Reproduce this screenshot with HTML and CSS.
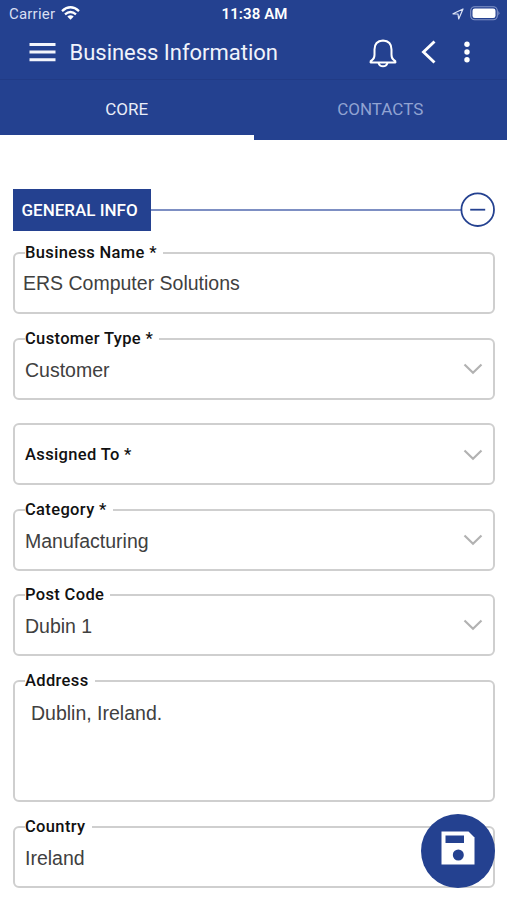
FILE: index.html
```html
<!DOCTYPE html>
<html lang="en">
<head>
<meta charset="utf-8">
<title>Business Information</title>
<link rel="stylesheet" href="styles.css">
</head>
<body>
<header class="header">
  <div class="status">
    <div class="status-left"><span class="carrier">Carrier</span>
      <svg width="19" height="14" viewBox="0 0 19 14" fill="none" stroke="#fff" stroke-width="2.3"><path d="M1 5.1Q9.5-2.5 18 5.1M4 8.4q5.5-4.8 11 0"/><path d="M6.3 10.6q3.2-2.6 6.4 0L9.5 13.8z" fill="#fff" stroke="none"/></svg>
    </div>
    <span class="clock">11:38 AM</span>
    <div class="status-right">
      <svg width="12" height="12" viewBox="0 0 12 12" fill="none" stroke="#dce3f5" stroke-width="1.2" stroke-linejoin="round"><path d="M1 5.8 11 1 6.7 11 6 6z"/></svg>
      <svg width="30" height="15" viewBox="0 0 30 15"><rect x=".7" y=".7" width="26.6" height="13.1" rx="4" fill="none" stroke="#8395c8" stroke-width="1.1"/><rect x="2.5" y="2.5" width="23" height="9.5" rx="2.3" fill="#fff"/><path d="M28.4 5q2 2.2 0 4.4z" fill="#8395c8"/></svg>
    </div>
  </div>
  <div class="toolbar">
    <svg class="menu" width="27" height="20" viewBox="0 0 27 20" stroke="#f3f5fc" stroke-width="2.9"><path d="M.5 2.500h26M.5 10h26M.5 17.700h26"/></svg>
    <h1 class="title">Business Information</h1>
    <svg class="bell" width="28" height="29" viewBox="0 0 28 29" fill="none" stroke="#fff" stroke-width="2" stroke-linejoin="round"><path d="M1.500 23.400q-.3-1.400 1.700-2.400Q5.500 19.500 5.500 15.800V10.500Q5.500 2 14 1.500 22.500 2 22.500 10.500v5.300q0 3.700 2.300 5.200 2 1 1.700 2.400z"/><path d="M9.500 23.700q1 3.600 4.500 3.600t4.500-3.600"/></svg>
    <svg class="back" width="15" height="24" viewBox="0 0 15 24" fill="none" stroke="#fff" stroke-width="2.900"><path d="M13.500 1.500 2.500 12l11 10.500"/></svg>
    <svg class="more" width="6" height="22" viewBox="0 0 6 22" fill="#fff"><circle cx="3" cy="3.300" r="2.700"/><circle cx="3" cy="11" r="2.700"/><circle cx="3" cy="18.700" r="2.700"/></svg>
  </div>
  <nav class="tabs">
    <div class="tab active"><span>CORE</span></div>
    <div class="tab"><span>CONTACTS</span></div>
  </nav>
</header>
<main class="form">
  <div class="section">
    <h2 class="section-title">GENERAL INFO</h2>
    <div class="rule"></div>
    <svg width="35" height="36" viewBox="0 0 35 36" fill="none" stroke="#244190" stroke-width="1.800"><circle cx="17.700" cy="17.700" r="16.300"/><path d="M10.200 17.700h15"/></svg>
  </div>
  <div class="field text"><label>Business Name *</label><span class="value">ERS Computer Solutions</span></div>
  <div class="field"><label>Customer Type *</label><span class="value">Customer</span><svg class="chevron" viewBox="0 0 20 12"><path d="m1.500 1.500 8.500 8.200 8.500-8.200"/></svg></div>
  <div class="field empty"><label>Assigned To *</label><svg class="chevron" viewBox="0 0 20 12"><path d="m1.500 1.500 8.500 8.200 8.500-8.200"/></svg></div>
  <div class="field"><label>Category *</label><span class="value">Manufacturing</span><svg class="chevron" viewBox="0 0 20 12"><path d="m1.500 1.500 8.500 8.200 8.500-8.200"/></svg></div>
  <div class="field"><label>Post Code</label><span class="value">Dubin 1</span><svg class="chevron" viewBox="0 0 20 12"><path d="m1.500 1.500 8.500 8.200 8.500-8.200"/></svg></div>
  <div class="field area"><label>Address</label><span class="value">Dublin, Ireland.</span></div>
  <div class="field"><label>Country</label><span class="value">Ireland</span></div>
</main>
<button class="save" aria-label="Save">
  <svg width="34" height="34" viewBox="0 0 34 34"><path d="M.5.500h27l6 6V33.500H.500z" fill="#fff"/><path d="M4.500 4.500h18.500v7.500H4.500z" fill="#244190"/><circle cx="17.300" cy="24" r="5.500" fill="#244190"/></svg>
</button>
</body>
</html>
```
FILE: styles.css
```css
* { box-sizing: border-box; }
body { margin: 0; height: 900px; overflow: hidden; background: #fff; font-family: Roboto, sans-serif; }
svg { display: block; flex: none; }
.header { height: 140px; background: #244190; color: #fff; }
.status { height: 28px; padding: 0 7px 0 9px; display: grid; grid-template-columns: 1fr auto 1fr; align-items: center; }
.status-left { display: flex; align-items: center; gap: 6px; }
.status-left svg { margin-top: -2px; }
.carrier { font-size: 15px; letter-spacing: .2px; color: #d8dff2; }
.clock { font-size: 15px; font-weight: 600; letter-spacing: .1px; }
.status-right { display: flex; justify-content: flex-end; align-items: center; gap: 6px; }
.status-right svg { margin-top: -1px; }
.toolbar { height: 51px; padding: 0 37px 3px 29px; display: flex; align-items: center; }
.menu { margin-top: -1px; }
.title { margin: 0 auto 0 13.5px; font-size: 22px; font-weight: 400; letter-spacing: -.02px; color: #f0f3fb; white-space: nowrap; }
.bell { margin-right: 24px; margin-top: 3px; }
.back { margin-right: 28px; }
.tabs { height: 61px; display: flex; border-top: 1px solid #213b86; }
.tab { flex: 1; display: flex; align-items: center; justify-content: center; font-size: 17px; color: #91a3d2; padding-bottom: 2px; }
.tab.active { color: #e9edf8; border-bottom: 5px solid #fff; padding-top: 3px; padding-bottom: 0; }
.form { padding: 49px 12px 0 13px; }
.section { height: 42px; display: flex; align-items: center; margin-bottom: 21px; }
.section-title { margin: 0; width: 138px; height: 42px; background: #244190; color: #fff; font-size: 17px; font-weight: 500; line-height: 42px; padding-left: 8.5px; white-space: nowrap; }
.rule { flex: 1; height: 2px; background: #7d8fc3; margin-right: -1px; }
.field { position: relative; height: 62px; margin-bottom: 23.5px; border: 2px solid #cfcfcf; border-radius: 6px; display: flex; align-items: center; padding: 3.500px 10px 0; color: #404040; font: 19.5px "Liberation Sans", sans-serif; }
.field label { position: absolute; left: 10px; top: -11px; height: 20px; line-height: 20px; padding-right: 6px; background: #fff; color: #111; font-family: Roboto, sans-serif; font-size: 16.5px; font-weight: 500; letter-spacing: .35px; white-space: nowrap; }
.field.text { padding: 0 8px; }
.field.empty { padding-top: 2px; }
.field.empty label { position: static; }
.field.area { height: 122.500px; align-items: flex-start; padding: 20px 16px 0; }
.chevron { width: 20px; height: 12px; margin-left: auto; margin-top: -3px; fill: none; stroke: #b2b2b2; stroke-width: 2.2; }
.field.empty .chevron { margin-top: -1px; }
.save { position: fixed; left: 421px; top: 814px; width: 74px; height: 74px; border: 0; padding: 0 0 6px; border-radius: 50%; background: #244190; display: flex; align-items: center; justify-content: center; }
```
